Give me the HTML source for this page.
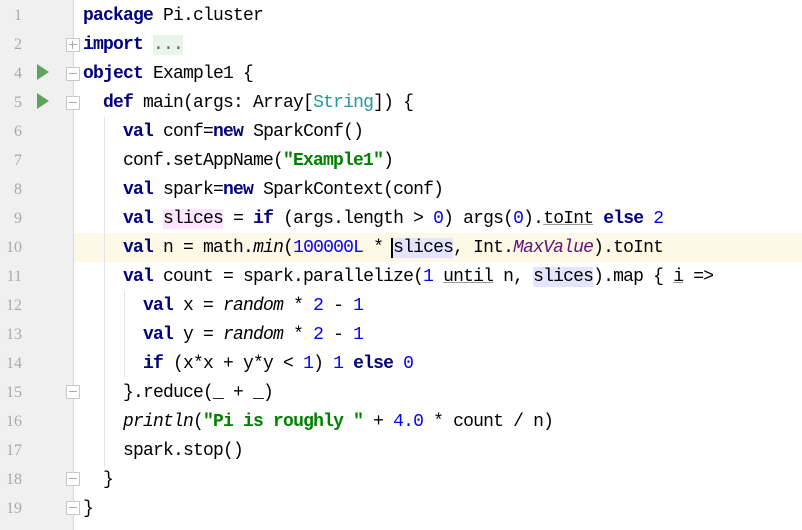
<!DOCTYPE html>
<html><head><meta charset="utf-8"><style>
body{margin:0;width:802px;height:530px;overflow:hidden;background:#fff;position:relative;font-family:"Liberation Mono",monospace;}
.gut{position:absolute;left:0;top:0;width:73px;height:530px;background:#f0f0f0;border-right:1px solid #d8d8d8;}
.ln{position:absolute;left:0;width:22px;text-align:right;color:#aaa;font-size:16px;font-family:"Liberation Serif",serif;}
.row{position:absolute;left:83px;height:29px;line-height:29px;font-size:18px;letter-spacing:-0.8px;white-space:pre;color:#000;}
.cur{position:absolute;left:74px;width:728px;height:29px;background:#fdf9e6;}
.k{color:#000080;font-weight:bold}
.n{color:#0000ff}
.s{color:#008000;font-weight:bold}
.i{font-style:italic}
.p{color:#660e7a;font-style:italic}
.u{text-decoration:underline;text-decoration-color:#999}
.hd{background:#ffe4ff}
.hu{background:#e4e4ff}
.run{position:absolute;left:37px;width:0;height:0;border-left:12px solid #5fa35f;border-top:8px solid transparent;border-bottom:8px solid transparent;}
.fold{position:absolute;left:66px;width:12px;height:12px;border:1px solid #c8c8c8;background:#fff;}
.fold:after{content:"";position:absolute;left:2px;right:2px;top:5px;height:1px;background:#aaa}
.g{position:absolute;width:1px;background:#e4e4e4}
</style></head><body>
<div class="gut"></div>
<div class="cur" style="top:233px"></div>
<div class="ln" style="top:7px">1</div>
<div class="ln" style="top:36px">2</div>
<div class="ln" style="top:65px">4</div>
<div class="ln" style="top:94px">5</div>
<div class="ln" style="top:123px">6</div>
<div class="ln" style="top:152px">7</div>
<div class="ln" style="top:181px">8</div>
<div class="ln" style="top:210px">9</div>
<div class="ln" style="top:239px">10</div>
<div class="ln" style="top:268px">11</div>
<div class="ln" style="top:297px">12</div>
<div class="ln" style="top:326px">13</div>
<div class="ln" style="top:355px">14</div>
<div class="ln" style="top:384px">15</div>
<div class="ln" style="top:413px">16</div>
<div class="ln" style="top:442px">17</div>
<div class="ln" style="top:471px">18</div>
<div class="ln" style="top:500px">19</div>
<div class="run" style="top:64px"></div>
<div class="run" style="top:93px"></div>
<div class="fold" style="top:38px"><div style="position:absolute;left:5px;top:2px;width:1px;height:8px;background:#aaa"></div></div>
<div class="fold" style="top:67px"></div>
<div class="fold" style="top:96px"></div>
<div class="fold" style="top:385px"></div>
<div class="fold" style="top:472px"></div>
<div class="fold" style="top:501px"></div>
<div class="g" style="left:104px;top:117px;height:350px"></div>
<div class="g" style="left:124px;top:291px;height:87px"></div>
<div class="row" style="top:2px"><span class="k">package</span> Pi.cluster</div>
<div class="row" style="top:31px"><span class="k">import</span> <span style="background:#e8f5e8;color:#666">...</span></div>
<div class="row" style="top:60px"><span class="k">object</span> Example1 {</div>
<div class="row" style="top:89px">  <span class="k">def</span> main(args: Array[<span style="color:#20999d">String</span>]) {</div>
<div class="row" style="top:118px">    <span class="k">val</span> conf=<span class="k">new</span> SparkConf()</div>
<div class="row" style="top:147px">    conf.setAppName(<span class="s">"Example1"</span>)</div>
<div class="row" style="top:176px">    <span class="k">val</span> spark=<span class="k">new</span> SparkContext(conf)</div>
<div class="row" style="top:205px">    <span class="k">val</span> <span class="hd">slices</span> = <span class="k">if</span> (args.length &gt; <span class="n">0</span>) args(<span class="n">0</span>).<span class="u">toInt</span> <span class="k">else</span> <span class="n">2</span></div>
<div class="row" style="top:234px">    <span class="k">val</span> n = math.<span class="i">min</span>(<span class="n">100000L</span> * <span style="border-left:2px solid #000;margin-left:-2px"></span><span class="hu">slices</span>, Int.<span class="p">MaxValue</span>).toInt</div>
<div class="row" style="top:263px">    <span class="k">val</span> count = spark.parallelize(<span class="n">1</span> <span class="u">until</span> n, <span class="hu">slices</span>).map { <span class="u">i</span> =&gt;</div>
<div class="row" style="top:292px">      <span class="k">val</span> x = <span class="i">random</span> * <span class="n">2</span> - <span class="n">1</span></div>
<div class="row" style="top:321px">      <span class="k">val</span> y = <span class="i">random</span> * <span class="n">2</span> - <span class="n">1</span></div>
<div class="row" style="top:350px">      <span class="k">if</span> (x*x + y*y &lt; <span class="n">1</span>) <span class="n">1</span> <span class="k">else</span> <span class="n">0</span></div>
<div class="row" style="top:379px">    }.reduce(_ + _)</div>
<div class="row" style="top:408px">    <span class="i">println</span>(<span class="s">"Pi is roughly "</span> + <span class="n">4.0</span> * count / n)</div>
<div class="row" style="top:437px">    spark.stop()</div>
<div class="row" style="top:466px">  }</div>
<div class="row" style="top:495px">}</div>
</body></html>
